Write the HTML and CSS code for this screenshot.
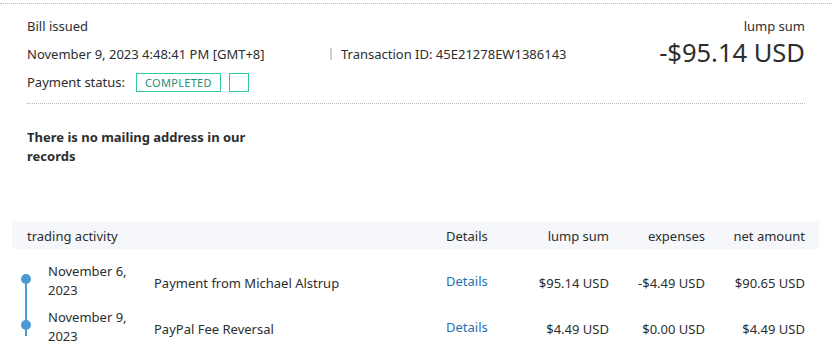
FILE: index.html
```html
<!DOCTYPE html>
<html lang="en">
<head>
  <meta charset="UTF-8" />
  <title>Transaction details</title>
  <link rel="stylesheet" href="styles.css">
</head>
<body>

  <div class="rule top-rule"></div>

  <section class="summary">
    <div class="summary-left">
      <div class="line">Bill issued</div>
      <div class="line meta">
        <span class="date">November 9, 2023 4:48:41 PM [GMT+8]</span>
        <span class="sep"></span>
        <span class="txn">Transaction ID: 45E21278EW1386143</span>
      </div>
      <div class="line status">
        <span>Payment status:</span>
        <span class="badge">COMPLETED</span>
        <span class="badge empty"></span>
      </div>
    </div>
    <div class="summary-right">
      <div class="line">lump sum</div>
      <div class="total">-$95.14 USD</div>
    </div>
  </section>

  <div class="rule inner-rule"></div>

  <p class="address">There is no mailing address in our records</p>

  <section class="activity">
    <div class="grid head">
      <div class="c-title">trading activity</div>
      <div>Details</div>
      <div class="num">lump sum</div>
      <div class="num">expenses</div>
      <div class="num">net amount</div>
    </div>

    <div class="grid row first">
      <div class="dot-cell"></div>
      <div class="c-date">November 6,<br>2023</div>
      <div class="c-desc">Payment from Michael Alstrup</div>
      <div><a class="link" href="#">Details</a></div>
      <div class="num">$95.14 USD</div>
      <div class="num">-$4.49 USD</div>
      <div class="num">$90.65 USD</div>
    </div>

    <div class="grid row last">
      <div class="dot-cell"></div>
      <div class="c-date">November 9,<br>2023</div>
      <div class="c-desc">PayPal Fee Reversal</div>
      <div><a class="link" href="#">Details</a></div>
      <div class="num">$4.49 USD</div>
      <div class="num">$0.00 USD</div>
      <div class="num">$4.49 USD</div>
    </div>
  </section>

</body>
</html>
```

FILE: styles.css
```css
* {
  box-sizing: border-box;
  margin: 0;
  padding: 0;
}

body {
  background: #fff;
  color: #2c2e2f;
  font-family: 'Noto Sans', 'Open Sans', sans-serif;
  font-size: 13px;
}

.rule {
  border-top: 1px dotted #b9b9b9;
}
.top-rule {
  margin-top: 3px;
}
.inner-rule {
  margin: 7px 27px 0;
}

/* Header summary */
.summary {
  display: flex;
  justify-content: space-between;
  padding: 8px 27px 0;
}
.line {
  height: 28px;
  line-height: 28px;
  white-space: nowrap;
}
.meta {
  display: flex;
  align-items: center;
}
.date {
  width: 303px;
}
.sep {
  width: 2px;
  height: 12px;
  background: #d0d0d0;
  margin-right: 9px;
}
.status {
  display: flex;
  align-items: center;
}
.badge {
  display: inline-block;
  height: 19px;
  line-height: 17px;
  border: 1px solid #2dcc98;
  color: #1e8f79;
  font-size: 11px;
  letter-spacing: 0.3px;
  padding: 0 8px;
  margin-left: 11px;
}
.badge.empty {
  width: 20px;
  padding: 0;
  margin-left: 8px;
}
.summary-right {
  text-align: right;
}
.total {
  font-size: 25.5px;
  line-height: 28px;
  margin-top: -2px;
}

/* Address */
.address {
  width: 240px;
  margin: 24px 0 0 27px;
  font-weight: 700;
  line-height: 19px;
}

/* Activity table */
.activity {
  margin: 56px 13px 0 12px;
}
.grid {
  display: grid;
  grid-template-columns: 36px 106px 292px 70px 93px 96px 100px;
  align-items: center;
}
.head {
  background: #f5f7fa;
  height: 27px;
}
.c-title {
  grid-column: 1 / 4;
  padding-left: 15px;
}
.num {
  text-align: right;
  white-space: nowrap;
}
.row {
  height: 46px;
}
.row.first {
  margin-top: 9px;
}
.c-date {
  line-height: 19px;
}
.c-desc,
.row .num {
  padding-top: 3px;
}
.link {
  color: #1f6fb2;
  text-decoration: none;
}

/* Timeline */
.dot-cell {
  position: relative;
  height: 100%;
}
.dot-cell::before {
  content: "";
  position: absolute;
  left: 13px;
  width: 2px;
  background: #4a9ad4;
}
.first .dot-cell::before {
  top: 20px;
  bottom: 0;
}
.last .dot-cell::before {
  top: 0;
  bottom: 14px;
}
.dot-cell::after {
  content: "";
  position: absolute;
  left: 9px;
  top: 16px;
  width: 10px;
  height: 10px;
  border-radius: 50%;
  background: #4a9ad4;
}
```
